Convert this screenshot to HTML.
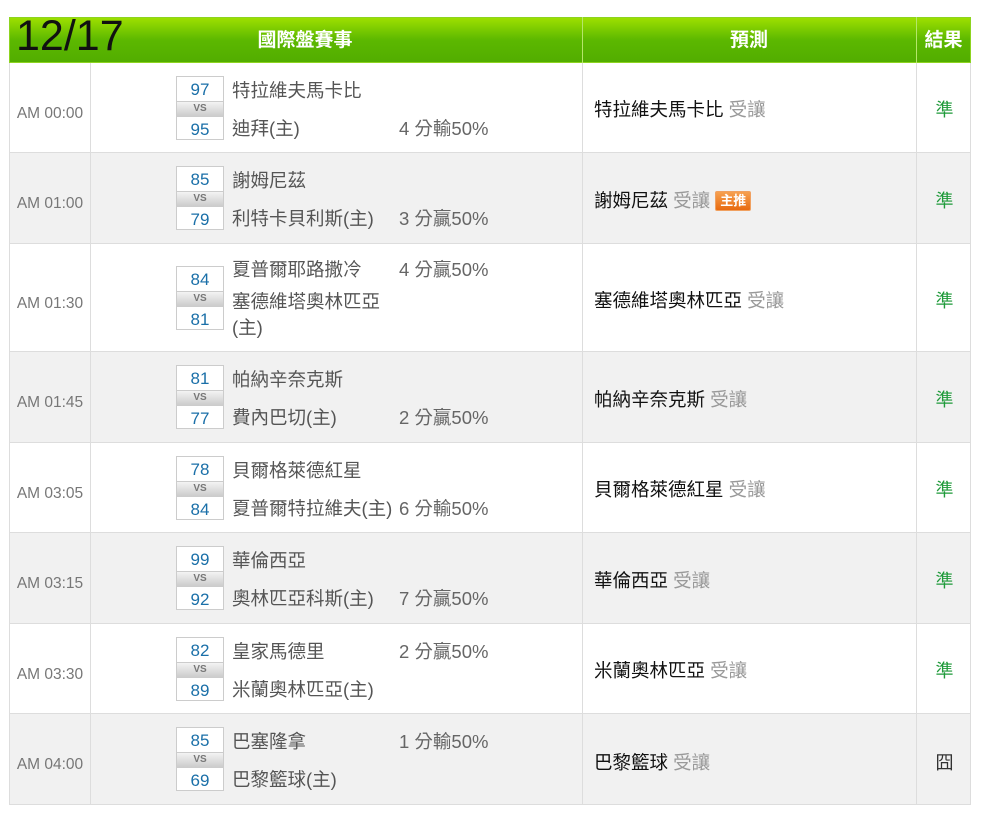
<!DOCTYPE html>
<html><head><meta charset="utf-8"><style>
body{margin:0;background:#fff;width:984px;height:817px;position:relative;overflow:hidden;font-family:"Liberation Sans","Noto Sans CJK TC",sans-serif}
.a{position:absolute;white-space:nowrap}
.hdr{position:absolute;left:9px;top:17px;width:962px;height:46px;background:linear-gradient(#9ddf00,#5cb800 50%,#52ad00);border:1px solid #8dd420;box-sizing:border-box}
.hc{position:absolute;top:17px;height:46px;line-height:48px;color:#fff;font-weight:bold;font-size:19px;text-align:center}
.vl{position:absolute;top:17px;height:46px;width:1px;background:#b5e66a}
.row{position:absolute;left:9px;width:962px;border:1px solid #ddd;border-top:none;box-sizing:border-box}
.g{background:#f1f1f1}
.cl{position:absolute;top:0;bottom:0;width:1px;background:#ddd}
.tm{position:absolute;left:0;width:80px;text-align:center;color:#777;font-size:15.5px}
.box{position:absolute;left:166px;width:48px;height:64px;border:1px solid #ccc;box-sizing:border-box;background:#fff}
.sc{height:24px;line-height:25px;text-align:center;color:#1a6fa8;font-size:17px}
.vs{height:14px;line-height:14px;background:linear-gradient(#f3f3f3,#ccc);color:#777;font-size:10px;font-weight:bold;text-align:center;border-top:1px solid #ccc;border-bottom:1px solid #ccc}
.tn{position:absolute;left:222px;color:#555;font-size:18.5px;line-height:24px}
.h{position:absolute;left:389px;color:#666;font-size:18.5px;line-height:24px}
.p{position:absolute;left:584px;color:#111;font-size:18.5px}
.p span{color:#999}
.r{position:absolute;left:907px;width:55px;text-align:center;color:#1f9a3a;font-size:18px}
.tag{display:inline-block;background:linear-gradient(#f6a050,#e86a10);color:#fff;font-size:13px;line-height:18px;padding:0 4px;border-radius:2px;border:1px solid #f0a060;vertical-align:2px}
</style></head><body>
<div class="hdr"></div>
<div class="vl" style="left:582px"></div><div class="vl" style="left:916px"></div>
<div class="hc" style="left:24px;width:562px">國際盤賽事</div>
<div class="hc" style="left:582px;width:334px">預測</div>
<div class="hc" style="left:916px;width:55px">結果</div>
<div class="a" style="left:16px;top:12px;font-size:43px;color:#111;line-height:48px">12/17</div>

<div class="row" style="top:63px;height:90px"><div class="cl" style="left:80px"></div><div class="cl" style="left:572px"></div><div class="cl" style="left:906px"></div>
<div class="tm" style="top:42px">AM 00:00</div>
<div class="box" style="top:13px"><div class="sc">97</div><div class="vs">VS</div><div class="sc">95</div></div>
<div class="tn" style="top:16px">特拉維夫馬卡比</div><div class="tn" style="top:54px">迪拜(主)</div><div class="h" style="top:54px">4 分輸50%</div>
<div class="p" style="top:33px">特拉維夫馬卡比 <span>受讓</span></div><div class="r" style="top:33px">準</div></div>

<div class="row g" style="top:153px;height:91px"><div class="cl" style="left:80px"></div><div class="cl" style="left:572px"></div><div class="cl" style="left:906px"></div>
<div class="tm" style="top:42px">AM 01:00</div>
<div class="box" style="top:13px"><div class="sc">85</div><div class="vs">VS</div><div class="sc">79</div></div>
<div class="tn" style="top:16px">謝姆尼茲</div><div class="tn" style="top:54px">利特卡貝利斯(主)</div><div class="h" style="top:54px">3 分贏50%</div>
<div class="p" style="top:34px">謝姆尼茲 <span>受讓</span> <b class="tag">主推</b></div><div class="r" style="top:34px">準</div></div>

<div class="row" style="top:244px;height:108px"><div class="cl" style="left:80px"></div><div class="cl" style="left:572px"></div><div class="cl" style="left:906px"></div>
<div class="tm" style="top:51px">AM 01:30</div>
<div class="box" style="top:22px"><div class="sc">84</div><div class="vs">VS</div><div class="sc">81</div></div>
<div class="tn" style="top:14px">夏普爾耶路撒冷</div><div class="tn" style="top:46px">塞德維塔奧林匹亞</div><div class="tn" style="top:72px">(主)</div><div class="h" style="top:14px">4 分贏50%</div>
<div class="p" style="top:43px">塞德維塔奧林匹亞 <span>受讓</span></div><div class="r" style="top:43px">準</div></div>

<div class="row g" style="top:352px;height:91px"><div class="cl" style="left:80px"></div><div class="cl" style="left:572px"></div><div class="cl" style="left:906px"></div>
<div class="tm" style="top:42px">AM 01:45</div>
<div class="box" style="top:13px"><div class="sc">81</div><div class="vs">VS</div><div class="sc">77</div></div>
<div class="tn" style="top:16px">帕納辛奈克斯</div><div class="tn" style="top:54px">費內巴切(主)</div><div class="h" style="top:54px">2 分贏50%</div>
<div class="p" style="top:34px">帕納辛奈克斯 <span>受讓</span></div><div class="r" style="top:34px">準</div></div>

<div class="row" style="top:443px;height:90px"><div class="cl" style="left:80px"></div><div class="cl" style="left:572px"></div><div class="cl" style="left:906px"></div>
<div class="tm" style="top:42px">AM 03:05</div>
<div class="box" style="top:13px"><div class="sc">78</div><div class="vs">VS</div><div class="sc">84</div></div>
<div class="tn" style="top:16px">貝爾格萊德紅星</div><div class="tn" style="top:54px">夏普爾特拉維夫(主)</div><div class="h" style="top:54px">6 分輸50%</div>
<div class="p" style="top:33px">貝爾格萊德紅星 <span>受讓</span></div><div class="r" style="top:33px">準</div></div>

<div class="row g" style="top:533px;height:91px"><div class="cl" style="left:80px"></div><div class="cl" style="left:572px"></div><div class="cl" style="left:906px"></div>
<div class="tm" style="top:42px">AM 03:15</div>
<div class="box" style="top:13px"><div class="sc">99</div><div class="vs">VS</div><div class="sc">92</div></div>
<div class="tn" style="top:16px">華倫西亞</div><div class="tn" style="top:54px">奧林匹亞科斯(主)</div><div class="h" style="top:54px">7 分贏50%</div>
<div class="p" style="top:34px">華倫西亞 <span>受讓</span></div><div class="r" style="top:34px">準</div></div>

<div class="row" style="top:624px;height:90px"><div class="cl" style="left:80px"></div><div class="cl" style="left:572px"></div><div class="cl" style="left:906px"></div>
<div class="tm" style="top:42px">AM 03:30</div>
<div class="box" style="top:13px"><div class="sc">82</div><div class="vs">VS</div><div class="sc">89</div></div>
<div class="tn" style="top:16px">皇家馬德里</div><div class="tn" style="top:54px">米蘭奧林匹亞(主)</div><div class="h" style="top:16px">2 分贏50%</div>
<div class="p" style="top:33px">米蘭奧林匹亞 <span>受讓</span></div><div class="r" style="top:33px">準</div></div>

<div class="row g" style="top:714px;height:91px"><div class="cl" style="left:80px"></div><div class="cl" style="left:572px"></div><div class="cl" style="left:906px"></div>
<div class="tm" style="top:42px">AM 04:00</div>
<div class="box" style="top:13px"><div class="sc">85</div><div class="vs">VS</div><div class="sc">69</div></div>
<div class="tn" style="top:16px">巴塞隆拿</div><div class="tn" style="top:54px">巴黎籃球(主)</div><div class="h" style="top:16px">1 分輸50%</div>
<div class="p" style="top:35px">巴黎籃球 <span>受讓</span></div><div class="r" style="top:35px;color:#333">囧</div></div>
</body></html>
